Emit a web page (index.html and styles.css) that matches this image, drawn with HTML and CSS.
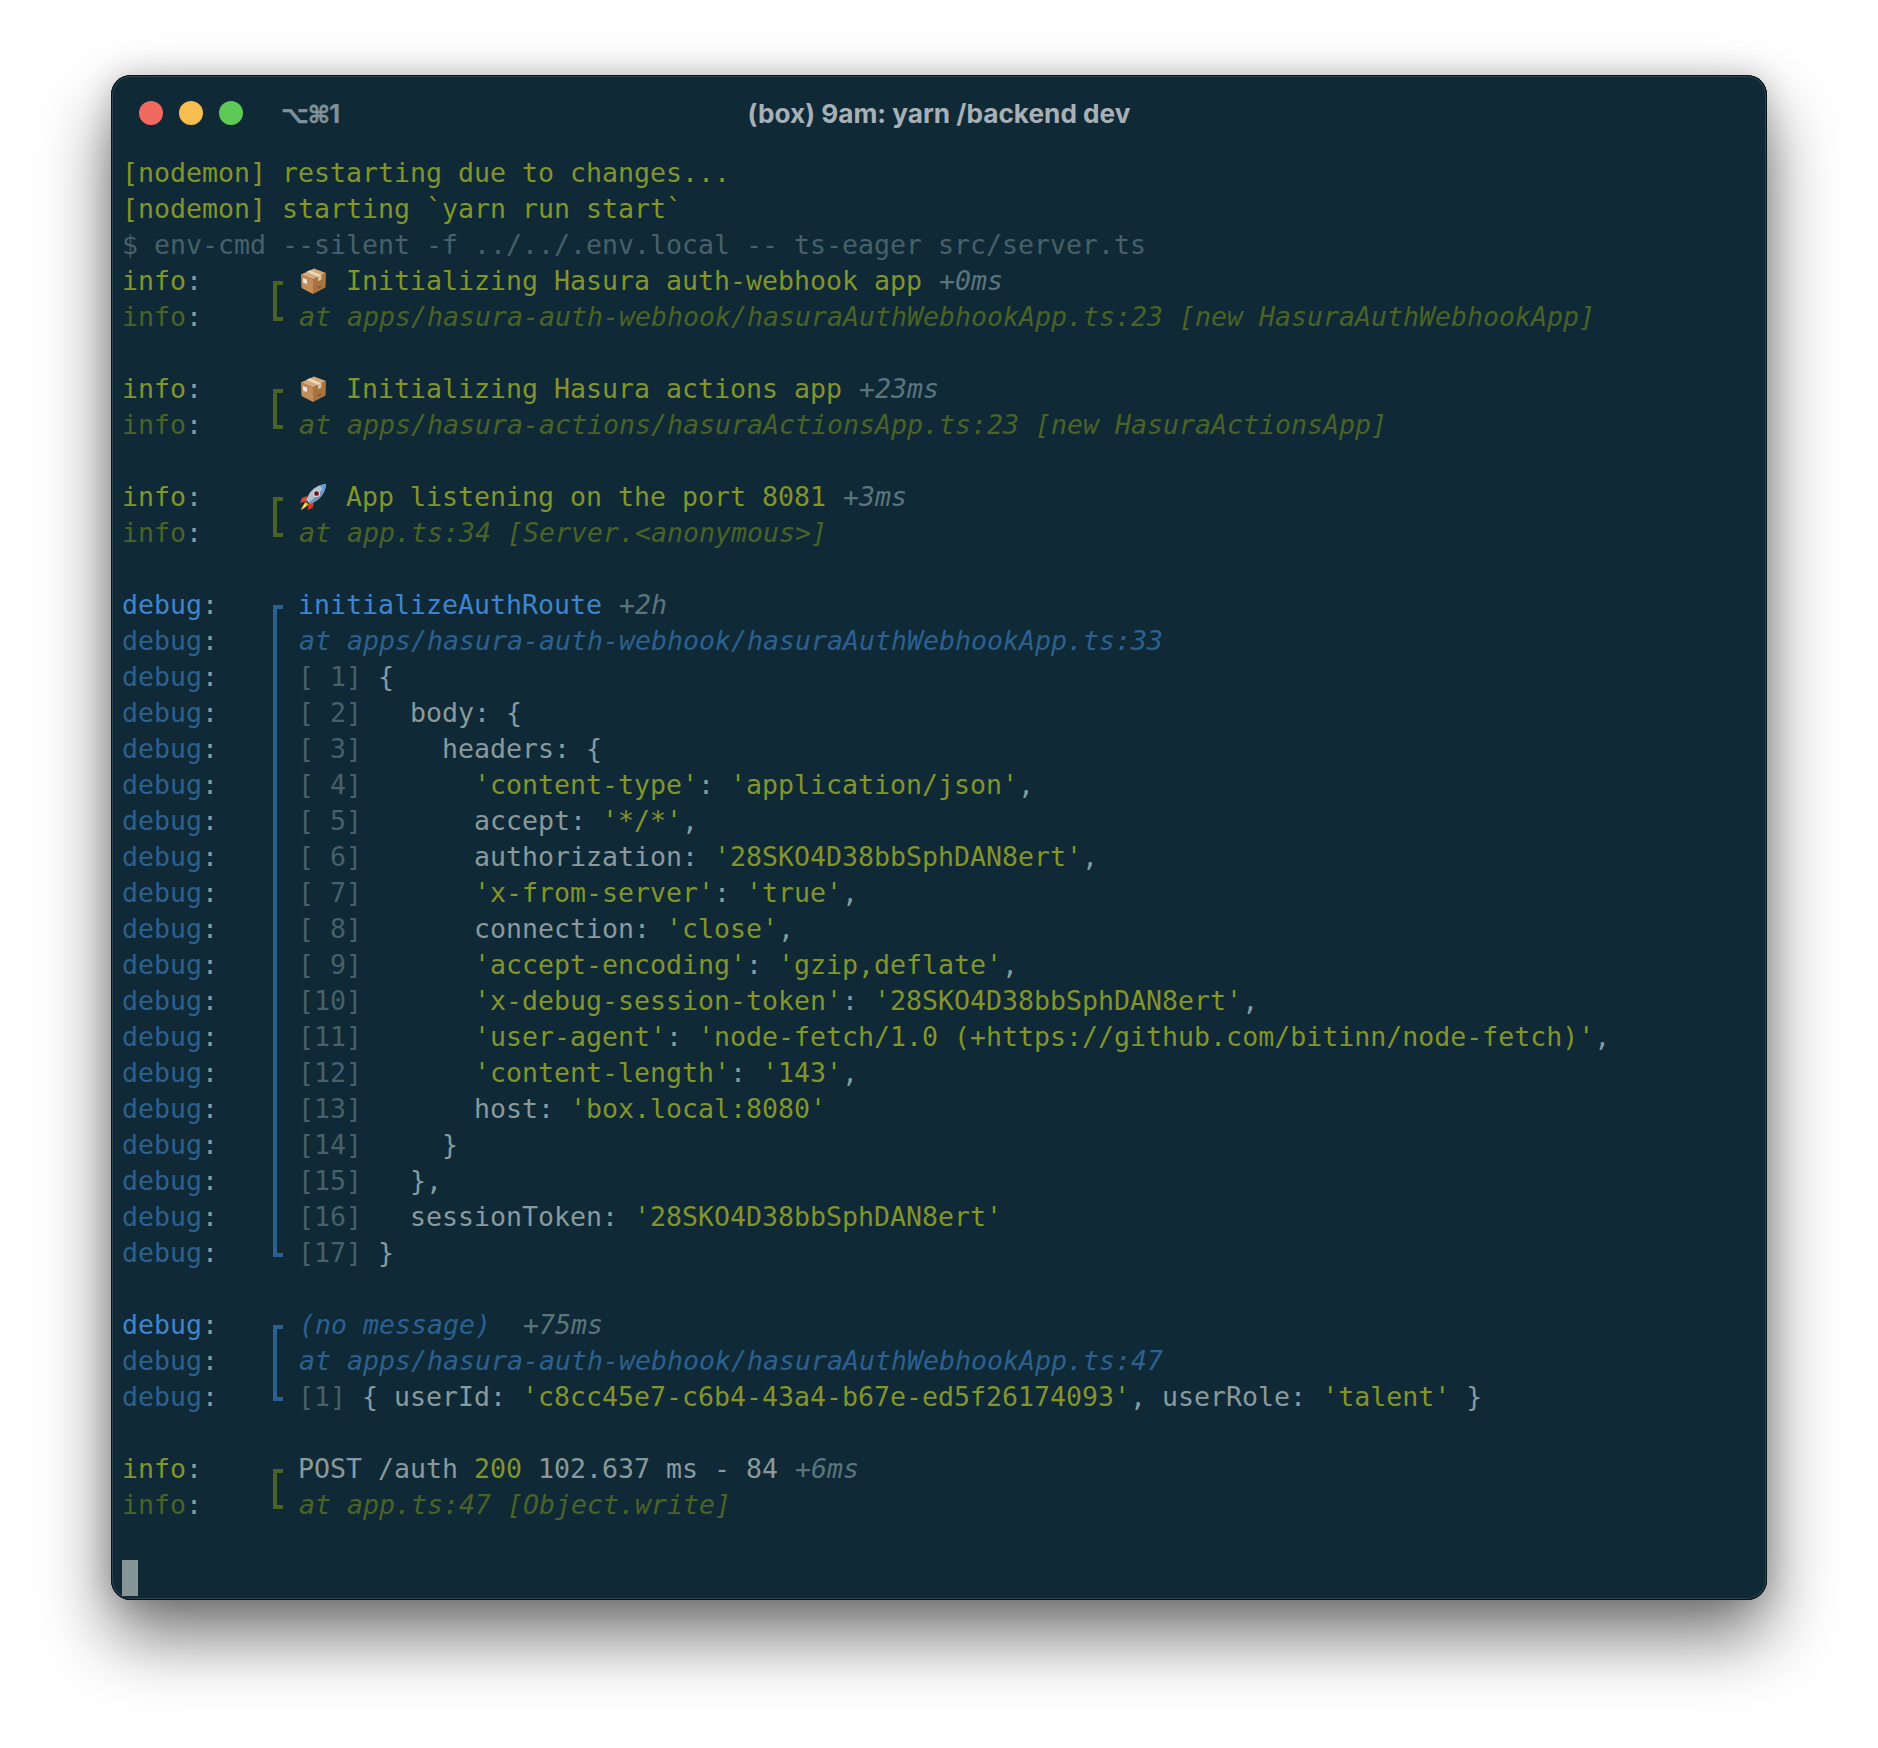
FILE: index.html
```html
<!DOCTYPE html>
<html lang="en">
<head>
<meta charset="utf-8">
<title>(box) 9am: yarn /backend dev</title>
<link rel="stylesheet" href="styles.css">
</head>
<body>
<main class="window">
  <header class="titlebar">
    <div class="lights"><span class="light red"></span><span class="light yellow"></span><span class="light green"></span></div>
    <span class="shortcut">⌥⌘<span class="digit">1</span></span>
    <span class="title">(box) 9am: yarn /backend dev</span>
  </header>
  <section class="term">
    <div class="ln y">[nodemon] restarting due to changes...</div>
    <div class="ln y">[nodemon] starting `yarn run start`</div>
    <div class="ln dg">$ env-cmd --silent -f ../../.env.local -- ts-eager src/server.ts</div>

    <div class="group info">
      <div class="labels"><div class="ln lab1">info<span class="c">:</span></div><div class="ln lab">info<span class="c">:</span></div></div>
      <div class="bracket"></div>
      <div class="body">
        <div class="ln y"><span class="emoji"><svg viewBox="0 0 28 28" width="28" height="28"><use href="#box"/></svg></span> Initializing Hasura auth-webhook app <i class="t">+0ms</i></div>
        <div class="ln at">at apps/hasura-auth-webhook/hasuraAuthWebhookApp.ts:23 [new HasuraAuthWebhookApp]</div>
      </div>
    </div>
    <div class="ln">&nbsp;</div>
    <div class="group info">
      <div class="labels"><div class="ln lab1">info<span class="c">:</span></div><div class="ln lab">info<span class="c">:</span></div></div>
      <div class="bracket"></div>
      <div class="body">
        <div class="ln y"><span class="emoji"><svg viewBox="0 0 28 28" width="28" height="28"><use href="#box"/></svg></span> Initializing Hasura actions app <i class="t">+23ms</i></div>
        <div class="ln at">at apps/hasura-actions/hasuraActionsApp.ts:23 [new HasuraActionsApp]</div>
      </div>
    </div>
    <div class="ln">&nbsp;</div>
    <div class="group info">
      <div class="labels"><div class="ln lab1">info<span class="c">:</span></div><div class="ln lab">info<span class="c">:</span></div></div>
      <div class="bracket"></div>
      <div class="body">
        <div class="ln y"><span class="emoji"><svg viewBox="0 0 28 28" width="28" height="28"><use href="#rocket"/></svg></span> App listening on the port 8081 <i class="t">+3ms</i></div>
        <div class="ln at">at app.ts:34 [Server.&lt;anonymous&gt;]</div>
      </div>
    </div>
    <div class="ln">&nbsp;</div>
    <div class="group debug">
      <div class="labels">
        <div class="ln lab1">debug<span class="c">:</span></div>
        <div class="ln lab">debug<span class="c">:</span></div>
        <div class="ln lab">debug<span class="c">:</span></div>
        <div class="ln lab">debug<span class="c">:</span></div>
        <div class="ln lab">debug<span class="c">:</span></div>
        <div class="ln lab">debug<span class="c">:</span></div>
        <div class="ln lab">debug<span class="c">:</span></div>
        <div class="ln lab">debug<span class="c">:</span></div>
        <div class="ln lab">debug<span class="c">:</span></div>
        <div class="ln lab">debug<span class="c">:</span></div>
        <div class="ln lab">debug<span class="c">:</span></div>
        <div class="ln lab">debug<span class="c">:</span></div>
        <div class="ln lab">debug<span class="c">:</span></div>
        <div class="ln lab">debug<span class="c">:</span></div>
        <div class="ln lab">debug<span class="c">:</span></div>
        <div class="ln lab">debug<span class="c">:</span></div>
        <div class="ln lab">debug<span class="c">:</span></div>
        <div class="ln lab">debug<span class="c">:</span></div>
        <div class="ln lab">debug<span class="c">:</span></div>
      </div>
      <div class="bracket"></div>
      <div class="body">
        <div class="ln b">initializeAuthRoute <i class="t">+2h</i></div>
        <div class="ln at">at apps/hasura-auth-webhook/hasuraAuthWebhookApp.ts:33</div>
        <div class="ln g"><span class="dg">[ 1]</span> {</div>
        <div class="ln g"><span class="dg">[ 2]</span>   body: {</div>
        <div class="ln g"><span class="dg">[ 3]</span>     headers: {</div>
        <div class="ln g"><span class="dg">[ 4]</span>       <span class="s">'content-type'</span>: <span class="s">'application/json'</span>,</div>
        <div class="ln g"><span class="dg">[ 5]</span>       accept: <span class="s">'*/*'</span>,</div>
        <div class="ln g"><span class="dg">[ 6]</span>       authorization: <span class="s">'28SKO4D38bbSphDAN8ert'</span>,</div>
        <div class="ln g"><span class="dg">[ 7]</span>       <span class="s">'x-from-server'</span>: <span class="s">'true'</span>,</div>
        <div class="ln g"><span class="dg">[ 8]</span>       connection: <span class="s">'close'</span>,</div>
        <div class="ln g"><span class="dg">[ 9]</span>       <span class="s">'accept-encoding'</span>: <span class="s">'gzip,deflate'</span>,</div>
        <div class="ln g"><span class="dg">[10]</span>       <span class="s">'x-debug-session-token'</span>: <span class="s">'28SKO4D38bbSphDAN8ert'</span>,</div>
        <div class="ln g"><span class="dg">[11]</span>       <span class="s">'user-agent'</span>: <span class="s">'node-fetch/1.0 (+https://github.com/bitinn/node-fetch)'</span>,</div>
        <div class="ln g"><span class="dg">[12]</span>       <span class="s">'content-length'</span>: <span class="s">'143'</span>,</div>
        <div class="ln g"><span class="dg">[13]</span>       host: <span class="s">'box.local:8080'</span></div>
        <div class="ln g"><span class="dg">[14]</span>     }</div>
        <div class="ln g"><span class="dg">[15]</span>   },</div>
        <div class="ln g"><span class="dg">[16]</span>   sessionToken: <span class="s">'28SKO4D38bbSphDAN8ert'</span></div>
        <div class="ln g"><span class="dg">[17]</span> }</div>
      </div>
    </div>
    <div class="ln">&nbsp;</div>
    <div class="group debug">
      <div class="labels">
        <div class="ln lab1">debug<span class="c">:</span></div>
        <div class="ln lab">debug<span class="c">:</span></div>
        <div class="ln lab">debug<span class="c">:</span></div>
      </div>
      <div class="bracket"></div>
      <div class="body">
        <div class="ln at">(no message)  <i class="t">+75ms</i></div>
        <div class="ln at">at apps/hasura-auth-webhook/hasuraAuthWebhookApp.ts:47</div>
        <div class="ln g"><span class="dg">[1]</span> { userId: <span class="s">'c8cc45e7-c6b4-43a4-b67e-ed5f26174093'</span>, userRole: <span class="s">'talent'</span> }</div>
      </div>
    </div>
    <div class="ln">&nbsp;</div>
    <div class="group info">
      <div class="labels"><div class="ln lab1">info<span class="c">:</span></div><div class="ln lab">info<span class="c">:</span></div></div>
      <div class="bracket"></div>
      <div class="body">
        <div class="ln g">POST /auth <span class="y">200</span> 102.637 ms - 84 <i class="t">+6ms</i></div>
        <div class="ln at">at app.ts:47 [Object.write]</div>
      </div>
    </div>
    <div class="ln">&nbsp;</div>
    <div class="ln"><span class="cursor"></span></div>
  </section>
</main>
<svg class="defs" width="0" height="0" aria-hidden="true">
  <defs>
    <symbol id="box" viewBox="0 0 28 28">
      <path d="M2 7.5 15 1.5 27 6 14 12.5Z" fill="#d7a875"/>
      <path d="M2 7.5 14 12.5 14 27 2.5 21Z" fill="#c18c58"/>
      <path d="M14 12.5 27 6 26.5 20.5 14 27Z" fill="#a9743f"/>
      <path d="M7.5 4.8 11 3.3 22.5 8.2 19 10Z" fill="#e8d8bd"/>
      <path d="M19 10 22.5 8.2 22.4 12.5 19 14.2Z" fill="#d9c4a1"/>
      <path d="M4 11 8 12.8 8 17.2 4 15.4Z" fill="#e9e6df"/>
      <path d="M18.5 19.5 22 18 22 20.5 18.5 22Z" fill="#8d5f33"/>
    </symbol>
    <symbol id="rocket" viewBox="0 0 28 28">
      <path d="M8 13 3 15 1 20 7.5 18Z" fill="#e2452c"/>
      <path d="M15 20 13.5 25 8.5 27 10 20.5Z" fill="#d83a24"/>
      <path d="M6.5 18.5 2 26 2.5 27 10 21.5Z" fill="#f6a623"/>
      <path d="M5.5 20.5 3.5 25.5 8 22.5Z" fill="#fde774"/>
      <path d="M27 1C20 1.500 14 5 10 11L7 17 11 21 17 18C23 14 26.500 8 27 1Z" fill="#aebfd1"/>
      <path d="M27 1C26.500 8 23 14 17 18L11 21 9.500 19.500C16 15 23 8 27 1Z" fill="#6f93bd"/>
      <path d="M27 1 20.500 2.600 25.400 7.500Z" fill="#5aa2dc"/>
      <circle cx="17.500" cy="10.500" r="3.600" fill="#d6d9de"/>
      <circle cx="17.500" cy="10.500" r="2.500" fill="#b02a2a"/>
      <circle cx="17.500" cy="10.500" r="1.300" fill="#2a1a22"/>
    </symbol>
  </defs>
</svg>
</body>
</html>
```
FILE: styles.css
```css
html, body { margin: 0; background: #fff; }
body { padding: 75px 111px 148px; }

.window {
  box-sizing: border-box;
  width: 1656px;
  height: 1525px;
  background: #0f2a36;
  border-radius: 20px;
  box-shadow: inset 0 0 0 1px #07131a, inset 0 0 0 2px #2f444e, 0 36px 70px rgba(0,0,0,.55), 0 0 30px rgba(0,0,0,.18);
  overflow: hidden;
}

.titlebar {
  position: relative;
  height: 80px;
  display: flex;
  align-items: center;
  padding: 0 0 4px 28px;
  box-sizing: border-box;
  font-family: Inter, "Liberation Sans", sans-serif;
  font-weight: 700;
}
.lights { display: flex; gap: 16px; }
.light { width: 24px; height: 24px; border-radius: 50%; }
.red { background: #f16a60; }
.yellow { background: #f7bd4f; }
.green { background: #5ec955; }
.shortcut {
  margin-left: 38px;
  font-size: 24px;
  color: #7e919a;
  font-family: "DejaVu Sans", sans-serif;
  letter-spacing: -1px;
  -webkit-text-stroke: .6px #7e919a;
}
.digit { font-family: Inter, sans-serif; font-size: 26px; letter-spacing: 0; -webkit-text-stroke: 0; }
.title { position: absolute; left: 0; right: 0; text-align: center; font-size: 26.2px; color: #a7b0b6; top: 23px; }

.term {
  padding-left: 11px;
  font-family: "DejaVu Sans Mono", monospace;
  font-size: 26.58px;
  color: #8a9a9c;
}
.ln { height: 36px; line-height: 36px; white-space: pre; }

.y { color: #83952a; }
.g { color: #8a9a9c; }
.b { color: #3e85cf; }
.dg { color: #47606a; }
.s { color: #83952a; }
.at { font-style: italic; padding-left: 1px; }
.t { font-style: italic; color: #5c757c; }
.y > .t, .b > .t, .g > .t { margin-left: 1px; }
.c { color: #8a9a9c; }

.group { display: flex; }
.labels { width: 151px; flex: none; }
.bracket {
  flex: none;
  box-sizing: border-box;
  width: 10px;
  margin: 18px 15px 14px 0;
  border: solid currentColor;
  border-width: 4px 0 4px 4px;
}
.body { flex: 1; min-width: 0; }

.info .lab1 { color: #83952a; }
.info .lab, .info .at, .info .bracket { color: #4b6226; }
.debug .lab1 { color: #3e85cf; }
.debug .lab, .debug .at, .debug .bracket { color: #2b6190; }

.emoji { display: inline-block; width: 31px; height: 28px; margin-left: 1px; vertical-align: -5px; }
.emoji svg { display: block; }

.cursor { display: block; width: 16px; height: 36px; margin-top: 1px; background: #869696; }
.defs { position: absolute; }
```
